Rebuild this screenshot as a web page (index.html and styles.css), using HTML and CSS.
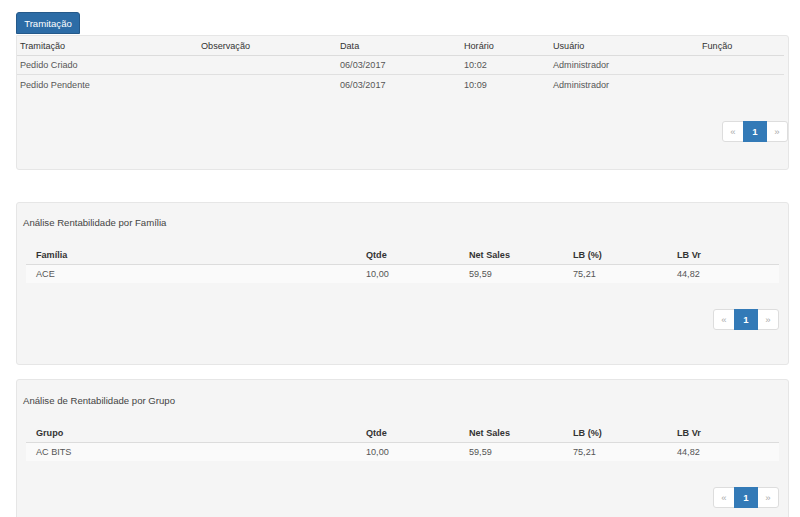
FILE: index.html
```html
<!DOCTYPE html>
<html lang="pt-BR">
<head>
    <meta charset="UTF-8">
    <meta name="viewport" content="width=device-width, initial-scale=1.0">
    <title>Pedido - Tramitação</title>
    <link rel="stylesheet" href="styles.css">
</head>
<body>
    <!-- Tramitação -->
    <button class="tab-button">Tramitação</button>
    <div class="well well-first">
        <table class="grid grid-tram">
            <thead>
                <tr>
                    <th class="c-tram">Tramitação</th>
                    <th class="c-obs">Observação</th>
                    <th class="c-data">Data</th>
                    <th class="c-hora">Horário</th>
                    <th class="c-user">Usuário</th>
                    <th>Função</th>
                </tr>
            </thead>
            <tbody>
                <tr>
                    <td>Pedido Criado</td>
                    <td></td>
                    <td>06/03/2017</td>
                    <td>10:02</td>
                    <td>Administrador</td>
                    <td></td>
                </tr>
                <tr>
                    <td>Pedido Pendente</td>
                    <td></td>
                    <td>06/03/2017</td>
                    <td>10:09</td>
                    <td>Administrador</td>
                    <td></td>
                </tr>
            </tbody>
        </table>
        <div class="pager-row pager-first">
            <ul class="pagination">
                <li>&laquo;</li>
                <li class="active">1</li>
                <li>&raquo;</li>
            </ul>
        </div>
    </div>

    <!-- Família -->
    <div class="well well-padded well-familia">
        <div class="well-title">Análise Rentabilidade por Família</div>
        <table class="grid grid-rent">
            <thead>
                <tr>
                    <th class="c-nome">Família</th>
                    <th class="c-qtde">Qtde</th>
                    <th class="c-net">Net Sales</th>
                    <th class="c-lb">LB (%)</th>
                    <th>LB Vr</th>
                </tr>
            </thead>
            <tbody>
                <tr>
                    <td>ACE</td>
                    <td>10,00</td>
                    <td>59,59</td>
                    <td>75,21</td>
                    <td>44,82</td>
                </tr>
            </tbody>
        </table>
        <div class="pager-row">
            <ul class="pagination">
                <li>&laquo;</li>
                <li class="active">1</li>
                <li>&raquo;</li>
            </ul>
        </div>
    </div>

    <!-- Grupo -->
    <div class="well well-padded well-grupo">
        <div class="well-title">Análise de Rentabilidade por Grupo</div>
        <table class="grid grid-rent">
            <thead>
                <tr>
                    <th class="c-nome">Grupo</th>
                    <th class="c-qtde">Qtde</th>
                    <th class="c-net">Net Sales</th>
                    <th class="c-lb">LB (%)</th>
                    <th>LB Vr</th>
                </tr>
            </thead>
            <tbody>
                <tr>
                    <td>AC BITS</td>
                    <td>10,00</td>
                    <td>59,59</td>
                    <td>75,21</td>
                    <td>44,82</td>
                </tr>
            </tbody>
        </table>
        <div class="pager-row">
            <ul class="pagination">
                <li>&laquo;</li>
                <li class="active">1</li>
                <li>&raquo;</li>
            </ul>
        </div>
    </div>
</body>
</html>
```

FILE: styles.css
```css
body {
    font-family: "Liberation Sans", Arial, sans-serif;
    margin: 0;
    padding: 12px 11px 0 16px;
    background: #fff;
    color: #555;
    overflow: hidden;
}

.tab-button {
    display: block;
    margin: 0;
    height: 22px;
    width: 64px;
    padding: 0;
    background-color: #2c6ca6;
    border: 1px solid #24598a;
    border-radius: 3px 3px 0 0;
    color: #fff;
    font-family: "Liberation Sans", Arial, sans-serif;
    font-size: 9.6px;
    cursor: pointer;
}

.well {
    background: #f5f5f5;
    border: 1px solid #e6e6e6;
    border-radius: 3px;
}

.well-first {
    margin-top: 1px;
    border-top-left-radius: 0;
    height: 133px;
}

.well-padded {
    padding: 13px 9px 0 9px;
}

.well-familia {
    margin-top: 32px;
    height: 148px;
}

.well-grupo {
    margin-top: 14px;
    padding-top: 14px;
    height: 200px;
}

.well-title {
    font-size: 9.6px;
    line-height: 14px;
    color: #444;
    margin-left: -3px;
    margin-bottom: 15px;
}

.grid {
    border-collapse: collapse;
    font-size: 9.1px;
    table-layout: fixed;
}

.grid th {
    text-align: left;
    color: #333;
    height: 19px;
    border-bottom: 1px solid #dcdcdc;
    padding: 0 4px;
}

.grid td {
    height: 18px;
    padding: 0 4px;
    color: #555;
}

.grid-tram {
    width: 767px;
}

.grid-tram th {
    font-weight: normal;
    padding: 0 3px;
}

.grid-tram td {
    height: 19px;
    padding: 0 3px;
}

.grid-tram tbody tr:first-child td {
    height: 18px;
    border-bottom: 1px solid #e0e0e0;
}

.c-tram { width: 175px; }
.c-obs { width: 133px; }
.c-data { width: 118px; }
.c-hora { width: 83px; }
.c-user { width: 143px; }

.grid-rent {
    width: 753px;
}

.grid-rent th,
.grid-rent td {
    padding: 0 10px;
}

.grid-rent th {
    font-weight: bold;
}

.grid-rent tbody td {
    background: #fafafa;
}

.c-nome { width: 310px; }
.c-qtde { width: 83px; }
.c-net { width: 84px; }
.c-lb { width: 84px; }

.pager-row {
    display: flex;
    justify-content: flex-end;
    margin-top: 26px;
}

.pager-first {
    margin-top: 27px;
}

.pagination {
    display: flex;
    list-style: none;
    margin: 0;
    padding: 0;
}

.pagination li {
    height: 19px;
    width: 20px;
    line-height: 19px;
    text-align: center;
    font-size: 9.6px;
    color: #aaa;
    background: #fff;
    border: 1px solid #ddd;
}

.pagination li + li {
    margin-left: -1px;
}

.pagination li:first-child {
    border-radius: 3px 0 0 3px;
}

.pagination li:last-child {
    border-radius: 0 3px 3px 0;
}

.pagination li.active {
    width: 22px;
    background: #337ab7;
    border-color: #337ab7;
    color: #fff;
    font-weight: bold;
    position: relative;
}
```
